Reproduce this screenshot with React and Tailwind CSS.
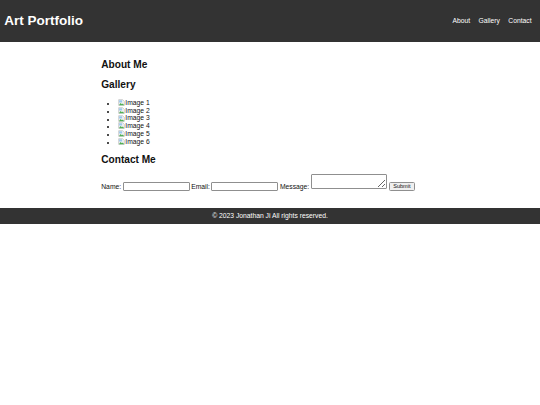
import React from "react";

function BrokenImg() {
  return (
    <svg width="7" height="7" viewBox="0 0 16 16" className="inline-block align-[-0.5px]">
      <path d="M1.5 1.5h9l4 4v9h-13z" fill="#f4f4f4" stroke="#9a9a9a" strokeWidth="1" />
      <rect x="2.5" y="3" width="7" height="5" fill="#9cc8ee" />
      <path d="M2 14l4-5 3 3 2-2 3 4z" fill="#4caf50" />
    </svg>
  );
}

export default function App() {
  const images = [1, 2, 3, 4, 5, 6];
  return (
    <div className="min-h-[405px] bg-white text-[#111111] font-['Liberation_Sans',Arial,sans-serif] text-[6.75px] leading-[1.15]">
      <header className="h-[42px] bg-[#333333] text-white flex items-center justify-between px-[4.2px]">
        <h1 className="text-[13.5px] font-bold leading-[1.15]">Art Portfolio</h1>
        <nav>
          <ul className="flex gap-[8.4px] pr-[4.2px] text-[6.75px]">
            <li><a className="text-white">About</a></li>
            <li><a className="text-white">Gallery</a></li>
            <li><a className="text-white">Contact</a></li>
          </ul>
        </nav>
      </header>
      <main className="w-[337.5px] mx-auto pt-[16.8px] pb-[16.8px]">
        <section>
          <h2 className="text-[10.125px] font-bold leading-[1.15] mb-[8.4px]">About Me</h2>
        </section>
        <section>
          <h2 className="text-[10.125px] font-bold leading-[1.15] mb-[8.4px]">Gallery</h2>
          <ul className="list-disc pl-[17px] mb-[8.4px]">
            {images.map((n) => (
              <li key={n} className="h-[7.76px]">
                <span className="inline-flex items-center">
                  <BrokenImg />
                  <span>Image {n}</span>
                </span>
              </li>
            ))}
          </ul>
        </section>
        <section>
          <h2 className="text-[10.125px] font-bold leading-[1.15] mb-[8.4px]">Contact Me</h2>
          <form className="flex items-end">
            <label className="mb-[1px]">Name:</label>
            <input className="ml-[1.5px] w-[67px] h-[8.8px] border border-[#8f8f8f] rounded-[1px] bg-white" />
            <label className="ml-[1.5px] mb-[1px]">Email:</label>
            <input className="ml-[1.5px] w-[67px] h-[8.8px] border border-[#8f8f8f] rounded-[1px] bg-white" />
            <label className="ml-[1.5px] mb-[1px]">Message:</label>
            <textarea className="ml-[2px] w-[76px] h-[15px] border border-[#8f8f8f] rounded-[1px] bg-white resize mb-[2.5px]" />
            <button type="button" className="ml-[2px] h-[8.8px] px-[3px] text-[5.6px] leading-none border border-[#8f8f8f] rounded-[1.5px] bg-[#efefef]">Submit</button>
          </form>
        </section>
      </main>
      <footer className="bg-[#333333] text-white text-center py-[4.2px] text-[6.75px] leading-[1.15]">
        © 2023 Jonathan Ji All rights reserved.
      </footer>
    </div>
  );
}
